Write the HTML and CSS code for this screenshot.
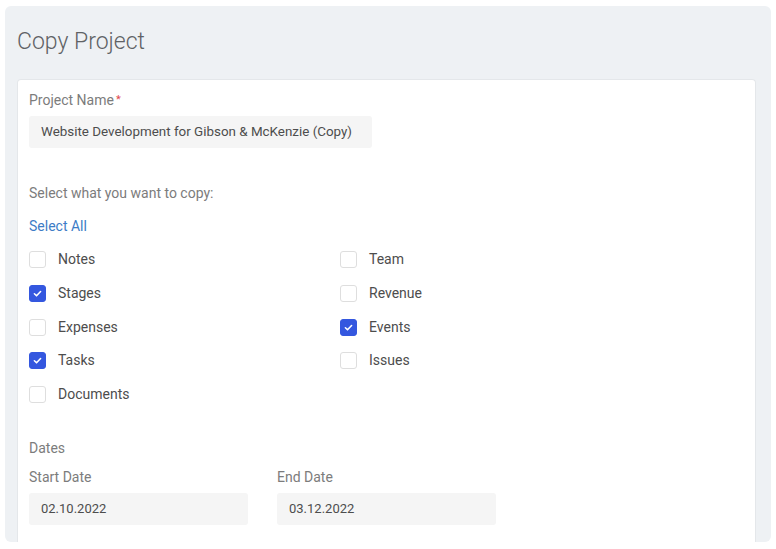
FILE: index.html
```html
<!DOCTYPE html>
<html>
<head>
<meta charset="utf-8">
<link rel="stylesheet" href="styles.css">
</head>
<body>
<div class="panel">
  <h1 class="title">Copy Project</h1>
  <div class="card">
    <div class="label">Project Name<span class="req">*</span></div>
    <div class="input wide">Website Development for Gibson &amp; McKenzie (Copy)</div>

    <div class="label section">Select what you want to copy:</div>
    <div class="link">Select All</div>

    <div class="checks">
      <div class="check"><span class="box"></span>Notes</div>
      <div class="check"><span class="box"></span>Team</div>
      <div class="check"><span class="box on"><svg viewBox="0 0 17 17"><path d="M5 8.8 L7.4 11.1 L12 6.3" fill="none" stroke="#fff" stroke-width="1.8" stroke-linecap="round" stroke-linejoin="round"/></svg></span>Stages</div>
      <div class="check"><span class="box"></span>Revenue</div>
      <div class="check"><span class="box"></span>Expenses</div>
      <div class="check"><span class="box on"><svg viewBox="0 0 17 17"><path d="M5 8.8 L7.4 11.1 L12 6.3" fill="none" stroke="#fff" stroke-width="1.8" stroke-linecap="round" stroke-linejoin="round"/></svg></span>Events</div>
      <div class="check"><span class="box on"><svg viewBox="0 0 17 17"><path d="M5 8.8 L7.4 11.1 L12 6.3" fill="none" stroke="#fff" stroke-width="1.8" stroke-linecap="round" stroke-linejoin="round"/></svg></span>Tasks</div>
      <div class="check"><span class="box"></span>Issues</div>
      <div class="check"><span class="box"></span>Documents</div>
    </div>

    <div class="label dates">Dates</div>
    <div class="date-row">
      <div class="field">
        <div class="label">Start Date</div>
        <div class="input date">02.10.2022</div>
      </div>
      <div class="field">
        <div class="label">End Date</div>
        <div class="input date">03.12.2022</div>
      </div>
    </div>
  </div>
</div>
</body>
</html>
```
FILE: styles.css
```css
* { box-sizing: border-box; }
html, body { margin: 0; padding: 0; background: #ffffff; }
body {
  font-family: Roboto, "Liberation Sans", Arial, sans-serif;
  color: #444;
  width: 776px;
  height: 549px;
  overflow: hidden;
}
.panel {
  margin: 6px 5px 0 5px;
  width: 766px;
  height: 536px;
  background: #eef1f4;
  border-radius: 6px;
  padding: 21px 15px 0 12px;
  display: flex;
  flex-direction: column;
}
.title {
  margin: 0;
  font-size: 23px;
  line-height: 30px;
  font-weight: 300;
  color: #5f6265;
}
.card {
  margin-top: 22px;
  flex: 1;
  background: #fff;
  border: 1px solid #e4e7ea;
  border-bottom: none;
  border-radius: 4px 4px 0 0;
  padding: 12px 11px 0 11px;
}
.label {
  font-size: 14px;
  line-height: 16px;
  color: #7c7c7c;
}
.req { color: #e0474c; margin-left: 2px; font-size: 11px; vertical-align: 2px; }
.input {
  margin-top: 8px;
  height: 32px;
  background: #f5f5f5;
  border-radius: 3px;
  padding: 0 12px;
  font-size: 13.4px;
  line-height: 32px;
  color: #4d4d4d;
}
.input.wide { width: 343px; }
.input.date { width: 219px; font-size: 13px; }
.section { margin-top: 37px; }
.link {
  margin-top: 17px;
  font-size: 14px;
  line-height: 16px;
  color: #3d7cc6;
}
.checks {
  margin-top: 17px;
  display: grid;
  grid-template-columns: 311px 311px;
  grid-auto-rows: 17px;
  row-gap: 16.75px;
}
.check {
  display: flex;
  align-items: center;
  font-size: 14px;
  color: #4d4d4d;
  line-height: 17px;
}
.box {
  width: 17px;
  height: 17px;
  border: 1px solid #dedede;
  border-radius: 3px;
  margin-right: 12px;
  flex: none;
  display: flex;
}
.box.on {
  background: #3457df;
  border-color: #3457df;
}
.box svg { width: 15px; height: 15px; }
.dates { margin-top: 36.5px; }
.date-row {
  margin-top: 13.5px;
  display: flex;
  gap: 29px;
}
```
